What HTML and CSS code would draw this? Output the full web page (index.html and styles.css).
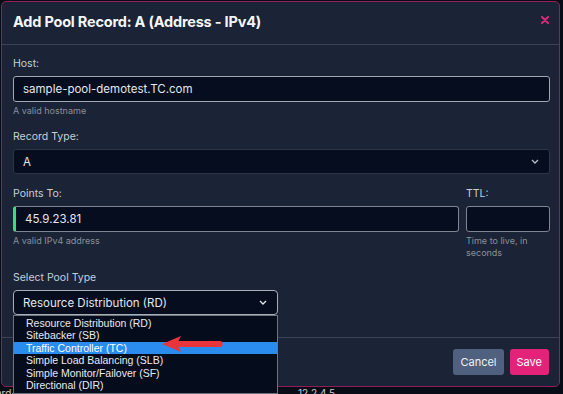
FILE: index.html
```html
<!DOCTYPE html>
<html lang="en">
<head>
    <meta charset="UTF-8">
    <meta name="viewport" content="width=device-width, initial-scale=1.0">
    <title>Add Pool Record</title>
    <link rel="stylesheet" href="styles.css">
</head>
<body>
    <!-- Modal -->
    <div class="modal">
        <div class="modal-header">
            <h1>Add Pool Record: A (Address - IPv4)</h1>
            <svg class="close" width="8" height="8" viewBox="0 0 8 8">
                <path d="M1 1 L7 7 M7 1 L1 7" stroke="#e0287a" stroke-width="2" stroke-linecap="round"/>
            </svg>
        </div>

        <div class="modal-body">
            <div class="field">
                <label>Host:</label>
                <div class="input focused">sample-pool-demotest.TC.com</div>
                <div class="help">A valid hostname</div>
            </div>

            <div class="field">
                <label>Record Type:</label>
                <div class="input select dim">
                    <span>A</span>
                    <svg width="8" height="5" viewBox="0 0 8 5"><path d="M1 1 L4 4 L7 1" stroke="#b8bec8" stroke-width="1.3" fill="none"/></svg>
                </div>
            </div>

            <div class="field-row">
                <div class="field grow">
                    <label>Points To:</label>
                    <div class="input valid">45.9.23.81</div>
                    <div class="help">A valid IPv4 address</div>
                </div>
                <div class="field ttl">
                    <label>TTL:</label>
                    <div class="input"></div>
                    <div class="help">Time to live, in seconds</div>
                </div>
            </div>

            <div class="field pool">
                <label>Select Pool Type</label>
                <div class="pool-select">
                    <div class="input select light">
                        <span>Resource Distribution (RD)</span>
                        <svg width="8" height="5" viewBox="0 0 8 5"><path d="M1 1 L4 4 L7 1" stroke="#e6e9ee" stroke-width="1.3" fill="none"/></svg>
                    </div>
                    <div class="options">
                        <div>Resource Distribution (RD)</div>
                        <div>Sitebacker (SB)</div>
                        <div class="active">Traffic Controller (TC)</div>
                        <div>Simple Load Balancing (SLB)</div>
                        <div>Simple Monitor/Failover (SF)</div>
                        <div>Directional (DIR)</div>
                    </div>
                    <svg class="arrow" width="64" height="18" viewBox="0 0 64 18">
                        <path d="M1 9 L20 1 L17.5 6 L60 6 Q63.5 9 60 12 L17.5 12 L20 17 Z" fill="#e8353b"/>
                    </svg>
                </div>
            </div>
        </div>

        <div class="modal-footer">
            <button class="btn cancel">Cancel</button>
            <button class="btn save">Save</button>
        </div>
    </div>

    <!-- Page behind the modal -->
    <div class="behind">
        <span class="left">ard-test.sample-pool-demotest.com</span>
        <span class="ip">12.2.4.5</span>
    </div>
</body>
</html>
```

FILE: styles.css
```css
body {
    font-family: Inter, "Noto Sans", sans-serif;
    margin: 0;
    padding: 0;
    background-color: #070c16;
    color: #dfe3ea;
    width: 563px;
    height: 394px;
    overflow: hidden;
}
/* Modal box */
.modal {
    margin: 1px 0 0 1px;
    width: 559px;
    height: 386px;
    box-sizing: border-box;
    border: 1px solid #8e1f5a;
    border-radius: 5px;
    background-color: #1b2336;
    display: flex;
    flex-direction: column;
}
.modal-header {
    height: 43px;
    box-sizing: border-box;
    border-bottom: 1px solid #3a4452;
    padding: 0 10px 0 11px;
    display: flex;
    align-items: center;
    justify-content: space-between;
}
.modal-header h1 {
    margin: 0 0 4px 0;
    font-size: 14.5px;
    font-weight: 700;
    color: #f4f6f9;
    letter-spacing: -0.2px;
}
.close {
    margin-bottom: 6px;
}
.modal-body {
    flex: 1;
    padding: 12px 9px 0 11px;
}
/* Form fields */
.field {
    margin-bottom: 13px;
}
.field label {
    display: block;
    font-size: 10.5px;
    line-height: 14px;
    color: #c9ced7;
    margin-bottom: 5px;
}
.input {
    height: 26px;
    box-sizing: border-box;
    background-color: #050d1f;
    border: 1px solid #7f8591;
    border-radius: 3px;
    padding: 0 9px;
    font-size: 11.5px;
    color: #e4e7ec;
    display: flex;
    align-items: center;
}
.input.focused {
    border-color: #a2a7b1;
}
.input.dim {
    border-color: #2c3445;
    height: 25px;
}
.input.valid {
    border-left: 3px solid #3bdc7e;
}
.select {
    justify-content: space-between;
    padding-right: 10px;
}
.help {
    font-size: 9px;
    line-height: 12px;
    color: #8a909b;
    margin-top: 3px;
}
.field-row {
    display: flex;
    gap: 7px;
}
.grow {
    flex: 1;
}
.ttl {
    width: 84px;
}
.field-row .field {
    margin-bottom: 12px;
}
/* Pool type select with its open list */
.pool-select {
    position: relative;
    width: 265px;
}
.input.light {
    border-color: #a9aeb7;
    height: 25px;
    border-radius: 4px;
}
.options {
    position: absolute;
    top: 25px;
    left: 0;
    width: 265px;
    box-sizing: border-box;
    background-color: #050c1c;
    border: 1px solid #6f7580;
    padding: 1px 0 2px;
    font-family: "Liberation Sans", Arial, sans-serif;
    font-size: 10.5px;
    color: #e8eaee;
    z-index: 2;
}
.options div {
    height: 12.4px;
    line-height: 12.4px;
    padding-left: 12px;
}
.options .active {
    background-color: #2b8cf0;
    color: #ffffff;
}
.arrow {
    position: absolute;
    left: 148px;
    top: 45px;
    z-index: 3;
}
.modal-footer {
    height: 49px;
    box-sizing: border-box;
    border-top: 1px solid #3a4452;
    padding: 0 10px;
    display: flex;
    align-items: center;
    justify-content: flex-end;
    gap: 6px;
}
.btn {
    height: 26px;
    border: none;
    border-radius: 3px;
    font-family: Inter, "Noto Sans", sans-serif;
    font-size: 11px;
    padding: 0 7px;
    color: #eef1f5;
    cursor: pointer;
}
.cancel {
    background-color: #50617f;
}
.save {
    background-color: #e3237a;
    color: #ffffff;
}
/* Table text showing below the modal */
.behind {
    position: relative;
    height: 7px;
    font-size: 10px;
    line-height: 12px;
    color: #c7cbd3;
}
.behind .left {
    position: absolute;
    left: -4px;
    top: 0;
}
.behind .ip {
    position: absolute;
    left: 298px;
    top: 0;
}
```
